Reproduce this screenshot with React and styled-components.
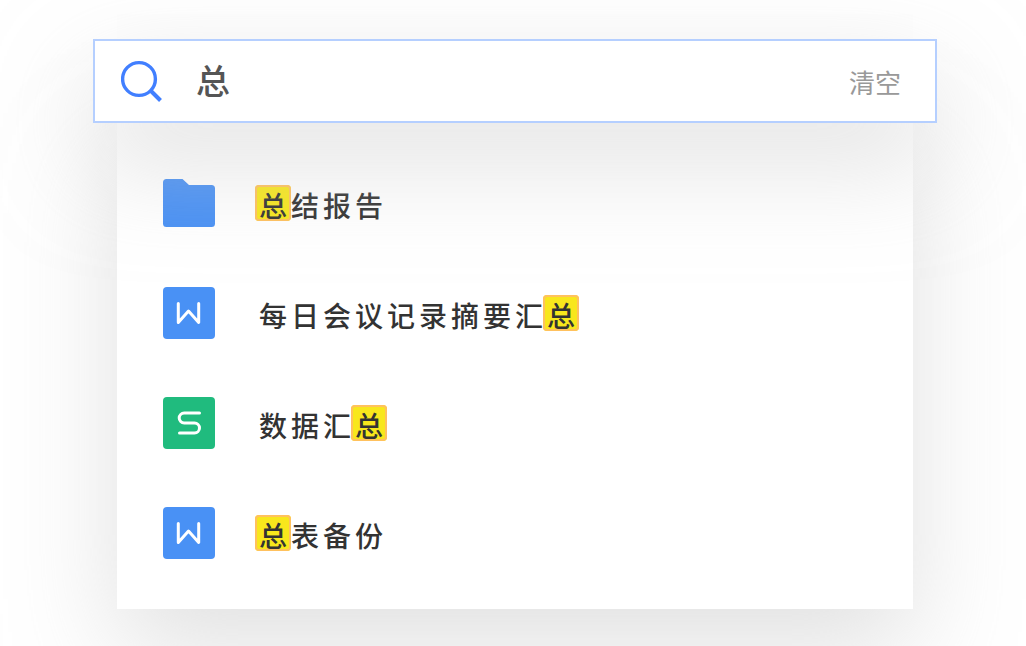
import { useState } from "react";
import styled, { createGlobalStyle } from "styled-components";

const files = [
  { id: 1, type: "folder", name: "总结报告" },
  { id: 2, type: "doc", name: "每日会议记录摘要汇总" },
  { id: 3, type: "sheet", name: "数据汇总" },
  { id: 4, type: "doc", name: "总表备份" },
];

const SearchIcon = () => (
  <svg width="42" height="42" viewBox="0 0 42 42" fill="none" aria-hidden="true">
    <circle cx="18" cy="19" r="16.4" stroke="#417fff" strokeWidth="3.4" />
    <path d="M30 31L39.5 40.5" stroke="#417fff" strokeWidth="4" />
  </svg>
);

const FileIcon = ({ type }) => {
  if (type === "folder") {
    return (
      <svg width="52" height="48" viewBox="0 0 52 48" aria-hidden="true">
        <path
          d="M3.5 0H19.5L26 6H48.5A3.5 3.5 0 0 1 52 9.5V44.5A3.5 3.5 0 0 1 48.5 48H3.5A3.5 3.5 0 0 1 0 44.5V3.5A3.5 3.5 0 0 1 3.5 0Z"
          fill="#4991f5"
        />
      </svg>
    );
  }
  return (
    <Badge $type={type}>
      <svg width="52" height="52" viewBox="0 0 52 52" fill="none" aria-hidden="true">
        <path
          d={
            type === "sheet"
              ? "M36.5 16H21.2a5 5 0 0 0 0 10H31.5a5 5 0 0 1 0 10H16.5"
              : "M15.3 16.5V35.5L25.5 24L35.7 35.5V16.5"
          }
          stroke="#fff"
          strokeWidth="3"
          strokeLinecap="round"
          strokeLinejoin="round"
        />
      </svg>
    </Badge>
  );
};

const FileName = ({ name, query }) => {
  if (!query) return <Name>{name}</Name>;
  const parts = name.split(query);
  return (
    <Name>
      {parts.map((part, i) => (
        <span key={i}>
          {i > 0 && <Mark>{query}</Mark>}
          {part}
        </span>
      ))}
    </Name>
  );
};

const App = () => {
  const [query, setQuery] = useState("总");

  const results = files.filter((file) => file.name.includes(query));

  return (
    <>
      <GlobalStyle />
      <Page>
        <SearchBar role="search">
          <SearchIcon />
          <Input
            type="text"
            aria-label="搜索"
            value={query}
            onChange={(e) => setQuery(e.target.value)}
          />
          <ClearBtn type="button" onClick={() => setQuery("")}>
            清空
          </ClearBtn>
        </SearchBar>
        <Results>
          {results.map((file) => (
            <li key={file.id}>
              <ResultLink href={`#file-${file.id}`}>
                <FileIcon type={file.type} />
                <FileName name={file.name} query={query} />
              </ResultLink>
            </li>
          ))}
        </Results>
      </Page>
    </>
  );
};

export default App;

const GlobalStyle = createGlobalStyle`
  * {
    box-sizing: border-box;
  }
  body {
    margin: 0;
    background-color: #fff;
    font-family: "Noto Sans CJK SC", "Noto Sans", sans-serif;
  }
`;

const Page = styled.main`
  padding: 39px 89px 37px 93px;
`;

const SearchBar = styled.div`
  display: flex;
  align-items: center;
  height: 84px;
  padding: 0 34px 0 26px;
  border: 2px solid #b5cfff;
  background-color: #fff;
  box-shadow: 0 40px 100px rgba(196, 196, 196, 0.5);
  position: relative;
  z-index: 1;
  & svg {
    flex-shrink: 0;
  }
`;

const Input = styled.input`
  flex: 1;
  min-width: 0;
  height: 80px;
  margin-left: 33px;
  padding: 0 0 4px;
  border: none;
  outline: none;
  background: transparent;
  font-family: inherit;
  font-size: 34px;
  font-weight: 500;
  color: #555;
`;

const ClearBtn = styled.button`
  flex-shrink: 0;
  padding: 2px 0 0;
  border: none;
  background: transparent;
  font-family: inherit;
  font-size: 26px;
  line-height: 40px;
  color: #999;
  cursor: pointer;
`;

const Results = styled.ul`
  margin: 0 24px;
  padding: 25px 0 21px;
  list-style: none;
  background-color: #fff;
  box-shadow: 0 40px 100px rgba(196, 196, 196, 0.5);
`;

const ResultLink = styled.a`
  display: flex;
  align-items: center;
  gap: 44px;
  height: 110px;
  padding: 0 46px;
  color: #333;
  text-decoration: none;
  & > svg {
    flex-shrink: 0;
  }
`;

const Badge = styled.span`
  display: flex;
  flex-shrink: 0;
  width: 52px;
  height: 52px;
  border-radius: 4px;
  background-color: ${({ $type }) => ($type === "sheet" ? "#20bb7e" : "#4991f5")};
`;

const Name = styled.span`
  padding-top: 2px;
  font-size: 28px;
  font-weight: 500;
  line-height: 36px;
  letter-spacing: 4px;
`;

const Mark = styled.mark`
  display: inline-block;
  height: 36px;
  margin-left: -4px;
  padding: 2px 0 0 4px;
  border-radius: 4px;
  background-color: #f8e71c;
  box-shadow: inset 0 0 0 2px #ffc15e;
  color: inherit;
`;
